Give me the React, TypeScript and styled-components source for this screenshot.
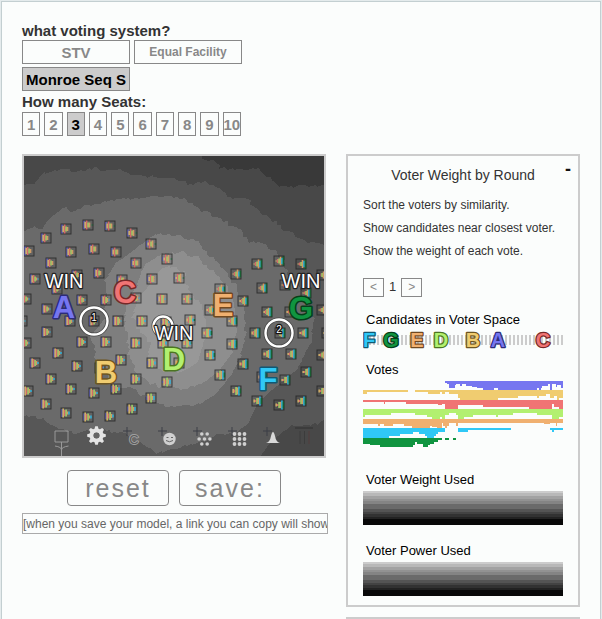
import React, { useState } from "react";
import styled, { createGlobalStyle } from "styled-components";

const GlobalStyle = createGlobalStyle`
  * { box-sizing: border-box; }
  body {
    margin: 0;
    background: #e4ebec;
    color: #333;
    font-family: "Liberation Sans", Arial, sans-serif;
  }
  button, input { font-family: inherit; margin: 0; }
`;

const Page = styled.div`
  min-height: calc(100vh - 1px);
  max-height: calc(100vh - 1px);
  overflow: hidden;
  margin: 1px 1px 0;
  padding: 20px 20px 0;
  border: 1px solid #c3cfd1;
  border-bottom: 0;
  background: #fbfdfc;
`;

const Settings = styled.section`
  margin-bottom: 18px;
`;

const Heading = styled.h2`
  margin: 0;
  font-size: 15px;
  line-height: 18px;
  font-weight: bold;
  & + div + & {
    margin: 2px 0 1px;
  }
`;

const SystemGrid = styled.div`
  display: grid;
  grid-template-columns: 108px 108px;
  gap: 3px 4px;
`;

const SeatRow = styled.div`
  display: grid;
  grid-template-columns: repeat(10, 1fr);
  gap: 4px;
  width: 219px;
`;

const Choice = styled.button<{ $on: boolean; $small?: boolean }>`
  display: flex;
  align-items: center;
  justify-content: center;
  min-width: 0;
  height: 24px;
  padding: 0;
  overflow: hidden;
  white-space: nowrap;
  border: 1px solid #888;
  border-radius: 0;
  background: ${(p) => (p.$on ? "#ccc" : "transparent")};
  color: ${(p) => (p.$on ? "#000" : "#888")};
  font-size: ${(p) => (p.$small ? 12 : 15)}px;
  font-weight: bold;
  cursor: pointer;
`;

const Columns = styled.main`
  display: grid;
  grid-template-columns: minmax(0, 306fr) minmax(0, 234fr);
  gap: 18px;
  align-items: start;
`;

const Arena = styled.div`
  margin-right: 2px;
  border: 2px solid #ccc;
  svg { display: block; width: 100%; height: auto; }
`;

const Actions = styled.div`
  display: flex;
  justify-content: center;
  gap: 10px;
  padding: 12px 0 7px;
  margin-right: 2px;
`;

const ActionButton = styled.button`
  width: 102px;
  height: 36px;
  padding: 0;
  border: 1px solid #888;
  border-radius: 4px;
  background: transparent;
  color: #888;
  font-size: 25px;
  letter-spacing: 2px;
  cursor: pointer;
`;

const LinkField = styled.input`
  display: block;
  width: 100%;
  height: 21px;
  padding: 0;
  border: 1px solid #aaa;
  background: transparent;
  color: #666;
  font-size: 12px;
`;

const Side = styled.aside`
  display: grid;
  gap: 10px;
`;

const Panel = styled.section`
  border: 2px solid #ccc;
  min-height: 40px;
`;

const PanelHeader = styled.header`
  display: grid;
  grid-template-columns: 15px 1fr 15px;
  align-items: start;
  padding-top: 9px;
`;

const PanelTitle = styled.h3`
  grid-column: 2;
  margin: 0;
  text-align: center;
  font-size: 14px;
  line-height: 20px;
  font-weight: normal;
`;

const Collapse = styled.button`
  height: 12px;
  padding: 0 0 4px 2px;
  border: 0;
  background: none;
  color: #111;
  font-size: 18px;
  line-height: 8px;
  font-weight: bold;
  text-align: left;
  cursor: pointer;
`;

const PanelBody = styled.div`
  padding: 9px 15px;
`;

const Line = styled.p`
  margin: 0;
  font-size: 12px;
  line-height: 23px;
`;

const Pager = styled.div`
  display: flex;
  align-items: center;
  gap: 5px;
  margin: 14px 0 15px;
  font-size: 13px;
  line-height: 20px;
`;

const PageButton = styled.button`
  width: 21px;
  height: 19px;
  padding: 0;
  border: 1px solid #888;
  background: transparent;
  color: #888;
  font-size: 12px;
  line-height: 15px;
  cursor: pointer;
`;

const ChartTitle = styled.h4`
  margin: 0;
  padding-left: 3px;
  color: #000;
  font-size: 13px;
  line-height: 16px;
  font-weight: normal;
`;

const Chart = styled.div<{ $before?: number; $after: number }>`
  padding: ${(p) => p.$before ?? 0}px 0 ${(p) => p.$after}px;
  svg { display: block; width: 100%; height: auto; }
`;

const Shades = styled.div`
  height: 34px;
  margin-top: 3px;
  background: linear-gradient(
    #ccc 0 2px, #b8b8b8 2px 5px, #a2a2a2 5px 8px, #929292 8px 10px,
    #848484 10px 13px, #6a6a6a 13px 18px, #545454 18px 21px, #434343 21px 23px,
    #323232 23px 26px, #222 26px 28px, #080808 28px 34px
  );
`;

type Candidate = { id: string; x: number; y: number; fill: string; edge: string; base: number };

const candidates: Candidate[] = [
  { id: "A", x: 40, y: 151, fill: "#7676f0", edge: "#2c2c78", base: 162 },
  { id: "B", x: 82, y: 216, fill: "#f0cc70", edge: "#6d5622", base: 227 },
  { id: "C", x: 101, y: 136, fill: "#f07474", edge: "#752828", base: 147 },
  { id: "D", x: 150, y: 203, fill: "#b2f070", edge: "#4c7522", base: 214 },
  { id: "E", x: 199, y: 149, fill: "#f0b070", edge: "#704820", base: 160 },
  { id: "F", x: 244, y: 223, fill: "#30c8f6", edge: "#125873", base: 234 },
  { id: "G", x: 277, y: 151, fill: "#109440", edge: "#053e19", base: 163 },
];

const voters: number[][] = [
  [22, 82], [42, 73], [64, 69], [86, 70], [108, 77], [127, 88], [143, 103], [5, 95], [47, 96],
  [70, 93], [92, 96], [112, 107], [27, 107], [11, 123], [75, 117], [128, 123], [53, 119],
  [33, 133], [98, 124], [2, 143], [58, 144], [82, 144], [112, 142], [138, 143], [155, 122],
  [163, 143], [233, 108], [255, 105], [277, 108], [212, 118], [298, 119], [196, 133],
  [238, 132], [261, 129], [282, 137], [219, 145], [23, 153], [23, 176], [46, 165], [70, 165],
  [94, 165], [118, 165], [142, 166], [58, 186], [82, 186], [2, 187], [112, 187], [139, 187],
  [34, 197], [11, 207], [53, 210], [76, 212], [97, 204], [128, 207], [27, 223], [112, 223],
  [143, 226], [47, 233], [92, 233], [70, 237], [4, 235], [22, 248], [127, 242], [42, 257],
  [64, 261], [86, 260], [108, 253], [-2, 165], [186, 154], [243, 156], [298, 154], [208, 165],
  [166, 164], [183, 177], [231, 177], [256, 177], [279, 177], [303, 177], [208, 188],
  [163, 187], [243, 198], [267, 198], [186, 199], [298, 199], [219, 208], [155, 207],
  [196, 219], [282, 216], [261, 224], [238, 221], [212, 235], [298, 235], [233, 245],
  [255, 249], [277, 245], [266, 156],
];

/* Elevation bands of the map, listed from dark to bright, in thirds of a unit. */
const bands: { fill: string; edge: string }[] = [
  {
    fill: "#484848",
    edge: "-30,-30 520,-30 530,2 565,15 590,35 640,42 700,40 730,60 765,92 930,88 930,930 -30,930",
  },
  {
    fill: "#575757",
    edge: "-30,85 30,85 60,50 110,40 160,45 210,38 250,45 280,38 330,58 390,62 440,65 500,85 540,80 590,100 620,125 670,128 700,165 740,190 790,225 830,252 930,280 930,770 880,805 800,810 740,860 690,930 -30,930",
  },
  {
    fill: "#6a6a6a",
    edge: "-30,240 30,212 55,222 75,190 120,152 150,168 180,152 230,140 280,130 330,127 390,121 440,123 480,130 510,150 560,175 600,195 650,225 670,255 710,262 750,285 785,325 800,370 845,420 870,490 860,560 820,640 760,690 700,740 675,800 640,830 580,835 560,850 480,872 400,890 330,850 290,830 220,822 150,830 90,810 60,785 -30,780",
  },
  {
    fill: "#7e7e7e",
    edge: "245,370 275,320 320,290 370,250 400,232 460,240 520,258 560,300 600,340 640,400 660,460 665,540 650,600 620,660 580,710 530,745 440,755 390,740 330,700 270,690 240,650 215,600 200,540 240,490 250,430",
  },
  {
    fill: "#8e8e8e",
    edge: "300,490 310,430 340,390 360,330 410,295 470,290 520,305 560,340 600,380 630,430 640,520 625,590 590,640 540,680 480,700 400,690 340,660 315,600 310,550",
  },
  {
    fill: "#989898",
    edge: "325,480 345,425 390,370 410,340 450,330 480,350 495,410 530,440 545,500 540,560 520,620 470,650 410,645 370,610 380,560 350,530",
  },
];

/* Splits each edge into short steps and nudges them, which gives a ragged coast line. */
function ragged(edge: string): string {
  const pts = edge.split(" ").map((p) => p.split(",").map(Number));
  const out: string[] = [];
  pts.forEach(([x, y], i) => {
    const [nx, ny] = pts[(i + 1) % pts.length];
    const steps = Math.max(1, Math.round(Math.hypot(nx - x, ny - y) / 9));
    for (let s = 0; s < steps; s++) {
      const seed = Math.sin((i * 31 + s) * 12.9898) * 43758.5453;
      const n = (seed - Math.floor(seed) - 0.5) * 9;
      const px = x + ((nx - x) * s) / steps + n;
      const py = y + ((ny - y) * s) / steps - n;
      out.push(`${Math.round(px / 3) * 3},${Math.round(py / 3) * 3}`);
    }
  });
  return out.join(" ");
}

function Voter({ x, y }: { x: number; y: number }) {
  const dist = candidates.map((c) => Math.hypot(c.x - x, c.y - y));
  const near = Math.min(...dist);
  const far = Math.max(...dist);
  return (
    <g>
      {candidates.map((c, i) => {
        const h = Math.round((10 * (far - dist[i])) / (far - near));
        return (
          <rect key={c.id} x={x - 5 + i * 1.43} y={y - h / 2} width="1.6" height={h} fill={c.fill} fillOpacity=".9" />
        );
      })}
      <rect x={x - 5} y={y - 5} width="10" height="10" fill="#000" fillOpacity=".08" stroke="#222" strokeOpacity=".75" />
    </g>
  );
}

const outlined = { paintOrder: "stroke", strokeLinejoin: "round" } as const;

function Win({ x, y }: { x: number; y: number }) {
  return (
    <text x={x} y={y} textAnchor="middle" fontSize="20" fill="#fff" stroke="#222" strokeWidth="2.5" {...outlined}>
      WIN
    </text>
  );
}

function Ring({ x, y, r, label }: { x: number; y: number; r: number; label?: string }) {
  return (
    <g>
      <circle cx={x} cy={y} r={r} fill="none" stroke="#333" strokeOpacity=".7" strokeWidth="4" />
      <circle cx={x} cy={y} r={r} fill="none" stroke="#fff" strokeWidth="2.4" />
      {label && (
        <text x={x} y={y} textAnchor="middle" fontSize="10" fill="#fff" stroke="#111" strokeWidth="2.5" {...outlined}>
          {label}
        </text>
      )}
    </g>
  );
}

function Plus({ x, y }: { x: number; y: number }) {
  return <path d={`M${x - 4} ${y}h9M${x} ${y - 4}v9`} stroke="#3c3f46" strokeWidth="1" fill="none" />;
}

function Tools() {
  const hex = [[0, 0], [-3, -5], [3, -5], [-6, 0], [6, 0], [-3, 5], [3, 5]];
  return (
    <g>
      <path d="M31 275h13v11h-13zM37.500 286v14M31 290q6.500 1 6.500 4q0-3 7-4" fill="none" stroke="#999" />
      <g transform="translate(72.500 279.500)">
        {[0, 45, 90, 135, 180, 225, 270, 315].map((a) => (
          <path key={a} d="M-2.400-5L-1.300-9.300h2.600L2.400-5z" fill="#e4e4e4" transform={`rotate(${a})`} />
        ))}
        <circle r="5" fill="none" stroke="#e4e4e4" strokeWidth="4" />
        <circle r="2.800" fill="#666" />
      </g>
      <Plus x={103} y={275} />
      <text x="110" y="287.500" textAnchor="middle" fontSize="13" fill="#5c5c5c" stroke="#a0a0a0" strokeWidth="2" {...outlined}>
        C
      </text>
      <Plus x={138} y={275} />
      <circle cx="145.500" cy="283" r="6.200" fill="#d0d0d0" />
      <path d="M142.500 281.500h2M147 281.500h2M142 284.500q3.500 2.500 7 0" stroke="#666" fill="none" />
      <Plus x={173} y={275} />
      {hex.map(([dx, dy]) => (
        <circle key={`${dx} ${dy}`} cx={180.5 + dx * 0.9} cy={283 + dy} r="1.800" fill="#d0d0d0" />
      ))}
      <Plus x={208} y={275} />
      {[-5, 0, 5].flatMap((dx) =>
        [-5, 0, 5].map((dy) => (
          <circle key={`${dx} ${dy}`} cx={215.5 + dx} cy={283 + dy} r="1.900" fill="#d0d0d0" />
        ))
      )}
      <Plus x={243} y={275} />
      <path d="M242 287q4-1 5-7q1-4 2-4t2 4q1 6 5 7z" fill="#d8d8d8" />
      <path d="M271 272h18" stroke="#383838" strokeWidth="1.500" />
      <path d="M276 275v13M280.500 275v13" stroke="#3c3c3c" />
      <path d="M285 275v13" stroke="#533c3c" />
    </g>
  );
}

function VoterMap() {
  return (
    <svg viewBox="0 0 300 300" role="img" aria-label="Map of voters and candidates">
      <rect width="300" height="300" fill="#393939" />
      <g transform="scale(0.33333)" shapeRendering="crispEdges">
        {bands.map((b) => (
          <polygon key={b.fill} points={ragged(b.edge)} fill={b.fill} />
        ))}
      </g>
      {voters.map(([x, y]) => (
        <Voter key={`${x} ${y}`} x={x} y={y} />
      ))}
      <Ring x={139} y={170} r={9.5} />
      {candidates.map((c) => (
        <text key={c.id} x={c.x} y={c.base} textAnchor="middle" fontSize="31" fontWeight="bold" fill={c.fill} stroke={c.edge} strokeWidth="3" {...outlined}>
          {c.id}
        </text>
      ))}
      <Ring x={70} y={165} r={13.5} label="1" />
      <Ring x={255} y={177} r={13.5} label="2" />
      <Win x={40} y={132} />
      <Win x={277} y={132} />
      <Win x={150} y={184} />
      <Tools />
    </svg>
  );
}

const stripLetters: [string, number][] = [
  ["F", 6], ["G", 28], ["E", 54], ["D", 78], ["B", 110], ["A", 135], ["C", 180],
];

function CandidateStrip() {
  return (
    <svg viewBox="0 -2 200 24" role="img" aria-label="Order of candidates among the voters">
      {Array.from({ length: 50 }, (_, i) => (
        <rect key={i} x={i * 4 + 2} y="5" width="2" height="10" fill="#ccc" />
      ))}
      {stripLetters.map(([id, x]) => {
        const c = candidates.find((k) => k.id === id)!;
        return (
          <text key={id} x={x} y="17" textAnchor="middle" fontSize="20" fontWeight="bold" fill={c.fill} stroke={c.edge} strokeWidth="2.500" {...outlined}>
            {id}
          </text>
        );
      })}
    </svg>
  );
}

/* For each candidate: top of the row, then "end:height" steps that start at `from`. */
const votes: { id: string; top: number; from: number; steps: string }[] = [
  { id: "A", top: 0, from: 255, steps: "261:5 267:9 285:21 288:12 300:9 306:15 318:9 336:15 351:18 369:21 402:27 414:21 531:27 537:21 543:27 546:21 564:15 570:9 576:27 588:9 591:18 603:12 609:21" },
  { id: "B", top: 27, from: 9, steps: "21:12 144:6 165:0 204:6 240:12 246:6 255:12 267:6 294:12 300:24 414:30 474:24 531:18 537:24 558:18 570:12 582:24 591:18 597:30 609:24" },
  { id: "C", top: 57, from: 9, steps: "72:6 75:12 138:6 234:12 246:15 255:12 294:27 369:15 507:21 576:27 582:12 597:21 609:27" },
  { id: "D", top: 84, from: 9, steps: "15:24 93:18 165:12 201:18 216:24 240:30 246:24 255:30 267:18 288:12 294:18 312:30 339:24 408:18 414:24 459:18 531:12 576:18 597:30 609:24" },
  { id: "E", top: 114, from: 9, steps: "54:15 60:21 72:15 99:21 132:15 156:21 210:27 216:21 231:24 246:27 249:12 255:21 261:27 267:21 288:12 294:21 552:12 570:15 588:12 591:21 609:12" },
  { id: "F", top: 141, from: 9, steps: "87:30 120:24 159:18 177:12 195:18 201:24 222:30 228:24 234:18 255:12 294:0 324:12 453:6 570:0 576:6 582:12 609:6" },
  { id: "G", top: 171, from: 9, steps: "30:18 60:21 159:27 165:21 171:12 189:18 204:27 210:21 222:18 234:12 246:6 255:0 267:6 279:0 288:6" },
];

function VotesChart() {
  return (
    <svg viewBox="9 0 600 198" role="img" aria-label="Votes for each candidate" shapeRendering="crispEdges">
      {votes.map((row) => {
        let d = `M${row.from} ${row.top}`;
        row.steps.split(" ").forEach((s) => {
          const [end, h] = s.split(":").map(Number);
          d += `V${row.top + h}H${end}`;
        });
        const fill = candidates.find((c) => c.id === row.id)!.fill;
        return <path key={row.id} d={`${d}V${row.top}z`} fill={fill} />;
      })}
    </svg>
  );
}

const systems = ["STV", "Equal Facility", "Monroe Seq S"];

export default function App() {
  const [system, setSystem] = useState(2);
  const [seats, setSeats] = useState(3);
  const [round, setRound] = useState(1);
  return (
    <>
      <GlobalStyle />
      <Page>
        <Settings>
          <Heading>what voting system?</Heading>
          <SystemGrid>
            {systems.map((name, i) => (
              <Choice key={name} $on={i === system} $small={i === 1} aria-pressed={i === system} onClick={() => setSystem(i)}>
                {name}
              </Choice>
            ))}
          </SystemGrid>
          <Heading>How many Seats:</Heading>
          <SeatRow>
            {Array.from({ length: 10 }, (_, i) => i + 1).map((n) => (
              <Choice key={n} $on={n === seats} aria-pressed={n === seats} onClick={() => setSeats(n)}>
                {n}
              </Choice>
            ))}
          </SeatRow>
        </Settings>
        <Columns>
          <div>
            <Arena>
              <VoterMap />
            </Arena>
            <Actions>
              <ActionButton>reset</ActionButton>
              <ActionButton>save:</ActionButton>
            </Actions>
            <LinkField readOnly aria-label="Link to the saved model" value="[when you save your model, a link you can copy will show up here]" />
          </div>
          <Side>
            <Panel>
              <PanelHeader>
                <PanelTitle>Voter Weight by Round</PanelTitle>
                <Collapse aria-label="Collapse">-</Collapse>
              </PanelHeader>
              <PanelBody>
                <Line>Sort the voters by similarity.</Line>
                <Line>Show candidates near closest voter.</Line>
                <Line>Show the weight of each vote.</Line>
                <Pager>
                  <PageButton aria-label="Previous round" onClick={() => setRound(Math.max(1, round - 1))}>&lt;</PageButton>
                  {round}
                  <PageButton aria-label="Next round" onClick={() => setRound(round + 1)}>&gt;</PageButton>
                </Pager>
                <ChartTitle>Candidates in Voter Space</ChartTitle>
                <Chart $after={10}>
                  <CandidateStrip />
                </Chart>
                <ChartTitle>Votes</ChartTitle>
                <Chart $before={3} $after={25}>
                  <VotesChart />
                </Chart>
                <ChartTitle>Voter Weight Used</ChartTitle>
                <Chart $after={18}>
                  <Shades />
                </Chart>
                <ChartTitle>Voter Power Used</ChartTitle>
                <Shades />
              </PanelBody>
            </Panel>
            <Panel />
          </Side>
        </Columns>
      </Page>
    </>
  );
}
